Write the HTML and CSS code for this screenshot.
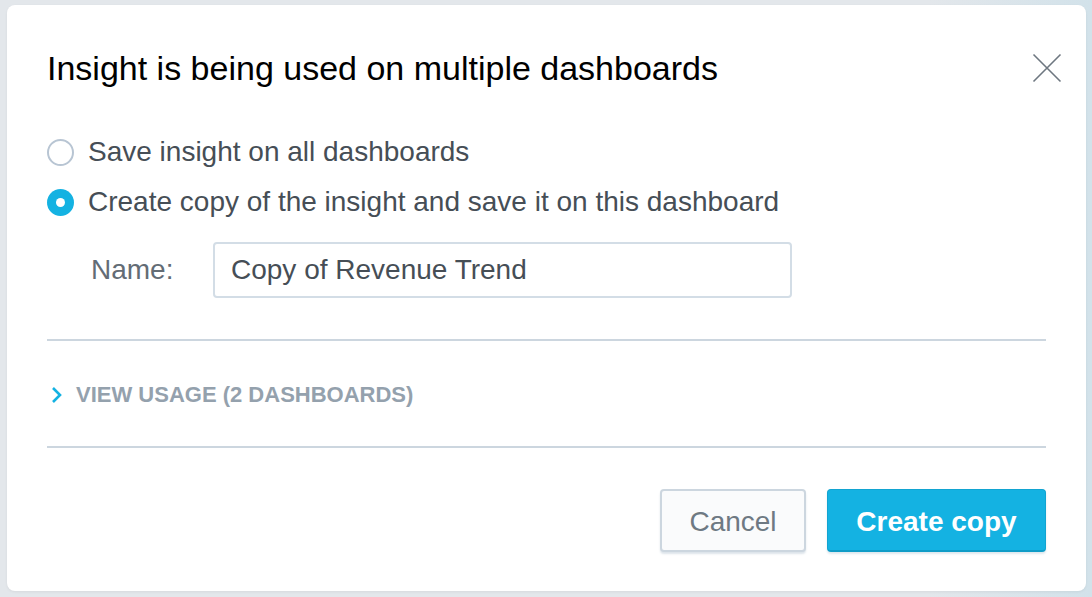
FILE: index.html
```html
<!DOCTYPE html>
<html>
<head>
<meta charset="utf-8">
<link rel="stylesheet" href="styles.css">
</head>
<body>
<div class="backdrop">
  <div class="modal">
    <button class="close" aria-label="Close">
      <svg width="30" height="30" viewBox="0 0 30 30"><path d="M1.5 1.5 L28.5 28.5 M28.5 1.5 L1.5 28.5" stroke="#6e7780" stroke-width="1.6" fill="none"/></svg>
    </button>
    <h1 class="title">Insight is being used on multiple dashboards</h1>
    <div class="options">
      <label class="option"><span class="radio"></span><span>Save insight on all dashboards</span></label>
      <label class="option"><span class="radio checked"></span><span>Create copy of the insight and save it on this dashboard</span></label>
    </div>
    <div class="name-row">
      <span class="name-label">Name:</span>
      <div class="input">Copy of Revenue Trend</div>
    </div>
    <div class="usage">
      <svg class="chevron" width="11" height="18" viewBox="0 0 11 18"><path d="M2 2 L9 9 L2 16" stroke="#14b2e2" stroke-width="2.6" fill="none"/></svg>
      <span>VIEW USAGE (2 DASHBOARDS)</span>
    </div>
    <div class="footer">
      <button class="btn cancel">Cancel</button>
      <button class="btn primary">Create copy</button>
    </div>
  </div>
</div>
</body>
</html>
```
FILE: styles.css
```css
* { box-sizing: border-box; }
html, body { margin: 0; padding: 0; }
body {
  width: 1092px;
  height: 597px;
  overflow: hidden;
  background: #e3e7eb;
  font-family: "Liberation Sans", Arial, sans-serif;
}
.backdrop {
  padding: 5px 6px 6px 7px;
  height: 597px;
  background: linear-gradient(90deg, #e3e7eb 0%, #e3e7eb 85%, #d2e2ea 100%);
}
.modal {
  position: relative;
  width: 1079px;
  height: 586px;
  background: #fff;
  border-radius: 8px;
  padding: 43px 40px 0 40px;
  box-shadow: 0 1px 3px rgba(0,0,0,0.06);
  display: flex;
  flex-direction: column;
}
.modal > * { flex: none; }
.close {
  position: absolute;
  top: 48px;
  right: 24px;
  width: 30px;
  height: 30px;
  padding: 0;
  border: 0;
  background: none;
}
.close svg { display: block; }
.title {
  margin: 0;
  font-size: 34px;
  line-height: 40px;
  font-weight: normal;
  color: #000;
}
.options {
  margin-top: 39px;
  display: flex;
  flex-direction: column;
}
.option {
  display: flex;
  align-items: center;
  height: 50px;
  font-size: 28px;
  color: #464e56;
}
.radio {
  width: 27px;
  height: 27px;
  border-radius: 50%;
  border: 2px solid #b8c5d3;
  margin-right: 14px;
  flex: none;
  display: flex;
  align-items: center;
  justify-content: center;
}
.radio.checked {
  border: none;
  background: #14b2e2;
}
.radio.checked::after {
  content: "";
  width: 9px;
  height: 9px;
  border-radius: 50%;
  background: #fff;
}
.name-row {
  margin-top: 15px;
  display: flex;
  align-items: center;
  padding-bottom: 41px;
  border-bottom: 2px solid #ccd6df;
}
.name-label {
  width: 166px;
  padding-left: 44px;
  font-size: 28px;
  color: #636c75;
}
.input {
  width: 579px;
  height: 56px;
  border: 2px solid #d3dde6;
  border-radius: 4px;
  padding-left: 16px;
  display: flex;
  align-items: center;
  font-size: 28px;
  color: #464e56;
}
.usage {
  height: 107px;
  padding-top: 3px;
  display: flex;
  align-items: center;
  border-bottom: 2px solid #ccd6df;
  font-size: 22px;
  font-weight: bold;
  color: #94a1ad;
}
.chevron {
  margin-left: 4px;
  margin-right: 14px;
}
.footer {
  margin-top: 41px;
  display: flex;
  justify-content: flex-end;
  gap: 21px;
}
.btn {
  height: 63px;
  padding: 3px 0 0 0;
  font-family: "Liberation Sans", Arial, sans-serif;
  font-size: 28px;
  border-radius: 4px;
}
.cancel {
  width: 146px;
  background: #fafbfc;
  border: 2px solid #ccd6df;
  color: #6e7983;
  box-shadow: 0 2px 2px rgba(180,195,208,0.45);
}
.primary {
  width: 219px;
  background: #14b2e2;
  border: 1px solid #12a4d1;
  border-bottom: 2px solid #0f9cc7;
  color: #fff;
  font-weight: bold;
  box-shadow: 0 2px 2px rgba(150,180,200,0.3);
}
```
